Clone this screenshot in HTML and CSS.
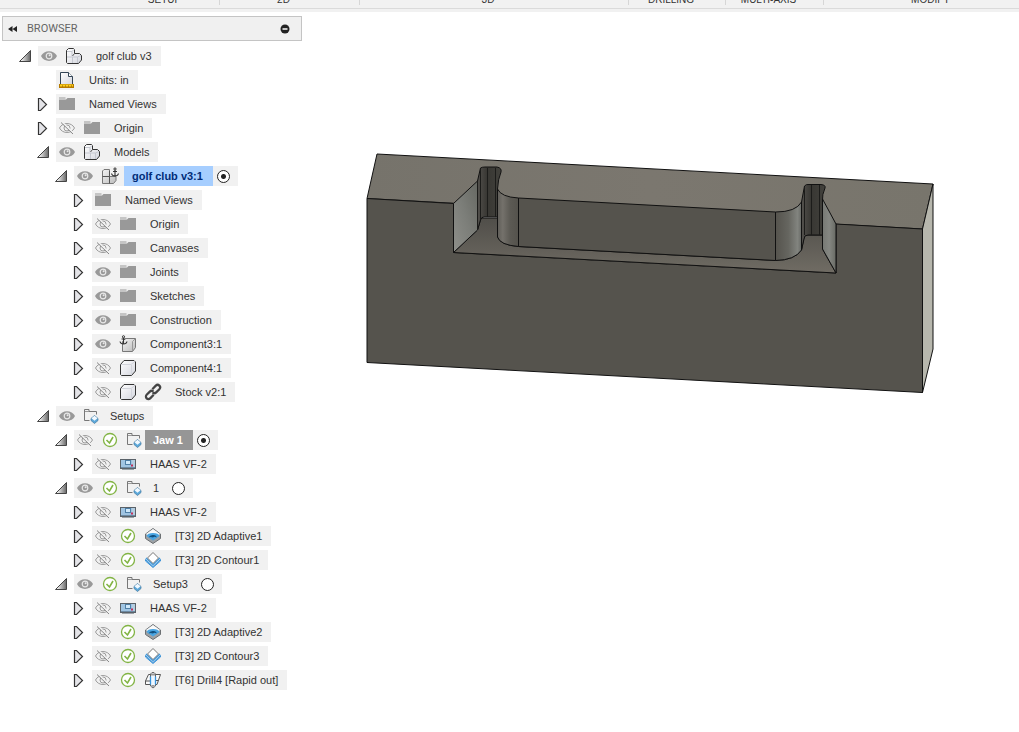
FILE: index.html
```html
<!DOCTYPE html>
<html lang="en">
<head>
<meta charset="utf-8">
<title>golf club v3</title>
<link rel="stylesheet" href="styles.css">
</head>
<body>
<svg class="defs" width="0" height="0" aria-hidden="true">
  <defs>
    <linearGradient id="g-tri" x1="0" y1="0" x2="1" y2="0"><stop offset="0.2" stop-color="#eee"/><stop offset="1" stop-color="#666"/></linearGradient>
    <linearGradient id="g-box" x1="0" y1="0" x2="1" y2="1"><stop offset="0" stop-color="#fff"/><stop offset="1" stop-color="#d4d6de"/></linearGradient>
    <linearGradient id="g-grey" x1="0" y1="0" x2="1" y2="1"><stop offset="0" stop-color="#f4f4f4"/><stop offset="1" stop-color="#bcbcbc"/></linearGradient>
    <symbol id="open" viewBox="0 0 24 20"><path d="M16.500 4.500V15.500H5.500Z" fill="url(#g-tri)" stroke="#444"/></symbol>
    <symbol id="closed" viewBox="0 0 24 20"><path d="M6.500 4.500H8.500L14.500 10.500L8.500 16.500H6.500Z" fill="#e4e4e8" stroke="#333" stroke-width="1.200"/></symbol>
    <symbol id="eye" viewBox="0 0 22 20"><path d="M3 10C6 3.500 16 3.500 19 10C16 16.500 6 16.500 3 10Z" fill="#999"/><circle cx="11" cy="10" r="2.800" fill="none" stroke="#e8e8e8" stroke-width="1.200"/><circle cx="11.600" cy="9.300" r="1" fill="#e8e8e8"/></symbol>
    <symbol id="hidden" viewBox="0 0 22 20"><path d="M3.500 10C6.500 4 15.500 4 18.500 10C15.500 16 6.500 16 3.500 10Z" fill="none" stroke="#9c9c9c"/><circle cx="11" cy="10" r="3" fill="none" stroke="#9c9c9c"/><path d="M6 4L18 15.500" stroke="#f1f1f1" stroke-width="1.600"/><path d="M5 4.500L17 16" stroke="#888"/></symbol>
    <symbol id="folder" viewBox="0 0 22 20"><path d="M3 3.500H9.500V4.500H3ZM3 5.500H10L11.500 4H19V16H3Z" fill="#999"/></symbol>
    <symbol id="doc" viewBox="0 0 22 20"><path d="M4.500 14V2.500H12.500L16.500 6.500V14" fill="url(#g-box)" stroke="#345"/><path d="M12.500 2.500V6.500H16.500" fill="#fff" stroke="#345"/><path d="M3 14H18V18H3Z" fill="#b67a00"/><path d="M4 15.500H17" stroke="#ffd21c" stroke-width="2"/><path d="M6 16H16" stroke="#8a5a00" stroke-dasharray="1 2"/></symbol>
    <symbol id="parts" viewBox="0 0 22 20"><path d="M3.500 4.500L5.500 2.500H10.500L11.500 3.500V7.500H16.500L18.500 9.500V14L15.500 17.500H4.500L3.500 16.500Z" fill="url(#g-box)" stroke="#333" stroke-linejoin="round"/><path d="M4 5.500H9L11 3.500M9 5.500V10M4 11H14.500L18 9.500M9.500 11V17M14.500 11V17" fill="none" stroke="#c4c7d0"/><path d="M11.500 7.500L9.500 10" fill="none" stroke="#555"/></symbol>
    <symbol id="parts-fixed" viewBox="0 0 22 20"><path d="M3.500 5L5 3.500H10.500V10.500H17V14.500L14.500 17.500H3.500Z" fill="url(#g-grey)" stroke="#777"/><path d="M3.500 10.500H10.500V17.500M10.500 5V10.500" fill="none" stroke="#555"/><path d="M16 4V9.500M14 5.500H18M12.500 7.500Q13 10 16 10Q19 10 19.500 7.500" fill="none" stroke="#333" stroke-width="1.100"/><circle cx="16" cy="3" r="1.100" fill="none" stroke="#333"/></symbol>
    <symbol id="box-fixed" viewBox="0 0 22 20"><path d="M5.500 7.500L8.500 4.500H18.500V13.500L15.500 17.500H5.500Z" fill="url(#g-grey)" stroke="#777"/><path d="M15.500 17V7.500L18 5" fill="none" stroke="#999"/><path d="M6.500 3.500V9.500M4.500 5H8.500M3 7.500Q3.500 10 6.500 10Q9.500 10 10 7.500" fill="none" stroke="#333" stroke-width="1.100"/><circle cx="6.500" cy="2.800" r="1.100" fill="#f1f1f1" stroke="#333"/></symbol>
    <symbol id="box" viewBox="0 0 22 20"><path d="M3.500 6.500L7 2.500H17L18.500 4V13L14.500 17.500H4.500L3.500 16.500Z" fill="url(#g-box)" stroke="#333" stroke-linejoin="round"/><path d="M4 6.500H14L18 3.500M14.500 7V17" fill="none" stroke="#d3d5dc"/></symbol>
    <symbol id="link" viewBox="0 0 22 20"><g transform="rotate(-45 11 10)" fill="none" stroke="#444" stroke-width="2.200"><path d="M9.500 12.500H4.500A2.500 2.500 0 0 1 4.500 7.500H9A2.500 2.500 0 0 1 11.500 10"/><path d="M12.500 7.500H17.500A2.500 2.500 0 0 1 17.500 12.500H13A2.500 2.500 0 0 1 10.500 10"/></g></symbol>
    <symbol id="setup" viewBox="0 0 21 20"><path d="M8.500 14.500H3.500V3.500H8V5.500H15.500V8.500" fill="none" stroke="#777"/><path d="M4 5.500H8" stroke="#999"/><path d="M13.500 9.500L17 12.500V14.500L13.500 17.500L10 14.500V12.500Z" fill="#5ba8da" stroke="#4b7fa5" stroke-width="0.800"/><path d="M13.500 9.800L16.500 12.300L13.500 14.800L10.500 12.300Z" fill="#f2f9ff"/></symbol>
    <symbol id="ok" viewBox="0 0 22 20"><circle cx="11" cy="10" r="6.500" fill="#fff" stroke="#82b444" stroke-width="1.300"/><path d="M7.500 10L10.500 13L14 7" fill="none" stroke="#82b444" stroke-width="1.600"/></symbol>
    <symbol id="machine" viewBox="0 0 22 20"><rect x="3.500" y="5.500" width="15" height="9" fill="#9fc4e2" stroke="#5a6269"/><path d="M4 13.500H18" stroke="#6d8ba4"/><path d="M5 15.500H17" stroke="#9aa2a8"/><rect x="8.500" y="6.500" width="5" height="4" fill="#cfe8fa" stroke="#4f7fa6"/><path d="M15 6H18V13H15Z" fill="#b4cde0"/><path d="M14 11.500H16" stroke="#c2305a" stroke-width="2"/></symbol>
    <symbol id="adaptive" viewBox="0 0 22 20"><path d="M3.500 8L11 2.500L18.500 8V12.500L11 17.500L3.500 12.500Z" fill="#9da1a5" stroke="#6c7073" stroke-linejoin="round"/><path d="M4 8L11 3L18 8L11 13Z" fill="#fafafa"/><path d="M4.500 10Q5.500 7 11 7Q16.500 7 17.500 10L11 14.500Z" fill="#4aa5e2"/><path d="M6.500 11.500Q8 8.500 11.500 9Q15 9.500 14.500 11.500Q12.500 10 11 11.500Q8.500 10.500 6.500 11.500Z" fill="#12507f"/></symbol>
    <symbol id="contour" viewBox="0 0 22 20"><path d="M3.500 9.500L11 16.500L18.500 9.500V11L11 17.500L3.500 11Z" fill="#8cc8f5" stroke="#3d92d6"/><path d="M4 8L11 14.500L18 8" fill="none" stroke="#3f9ae0" stroke-width="1.400"/><path d="M11 2.500L16.500 8L11 13.500L5.500 8Z" fill="#fff" stroke="#777"/></symbol>
    <symbol id="drill" viewBox="0 0 22 20"><path d="M6.500 4.500H18.500L15 14.500H12.500M9 14.500H3.500V11L6.500 4.500M3.500 11H8M13 10.500H16" fill="#fafafa" stroke="#555"/><path d="M8.500 4L10 2.500H12L13.500 4V16L11 18L8.500 16Z" fill="#eef7ff" stroke="#666"/><path d="M8.500 6.500V14.500M13.500 6.500V14.500" stroke="#3593dd" stroke-width="1.300"/><path d="M9 3.500H13V5.500H9ZM9 15H13L11 17.500Z" fill="#999"/></symbol>
  </defs>
</svg>

<header class="toolbar">
  <div class="groups">
    <span class="group first">SETUP</span>
    <span class="group">2D</span>
    <span class="group">3D</span>
    <span class="group">DRILLING</span>
    <span class="group">MULTI-AXIS</span>
    <span class="group last">MODIFY</span>
  </div>
</header>

<div class="workspace">
<aside class="panel">
  <div class="panel-head">
    <button class="plain" aria-label="Collapse panel"><svg width="12" height="10"><path d="M5.500 2V8L1 5ZM10 2V8L5.500 5Z" fill="#222"/></svg></button>
    <h1>BROWSER</h1>
    <button class="plain" aria-label="Minimise"><svg width="10" height="10"><circle cx="5" cy="5" r="4.500" fill="#222"/><path d="M2.500 5H7.500" stroke="#fff" stroke-width="1.500"/></svg></button>
  </div>

  <ul class="tree">
    <li>
      <div class="row"><button class="toggle" aria-label="Collapse"><svg><use href="#open"/></svg></button><div class="item"><button class="icon" aria-label="Hide"><svg><use href="#eye"/></svg></button><svg class="icon"><use href="#parts"/></svg><span class="name">golf club v3</span></div></div>
      <ul>
        <li><div class="row leaf"><div class="item"><svg class="icon"><use href="#doc"/></svg><span class="name">Units: in</span></div></div></li>
        <li><div class="row"><button class="toggle" aria-label="Expand"><svg><use href="#closed"/></svg></button><div class="item"><svg class="icon"><use href="#folder"/></svg><span class="name">Named Views</span></div></div></li>
        <li><div class="row"><button class="toggle" aria-label="Expand"><svg><use href="#closed"/></svg></button><div class="item"><button class="icon" aria-label="Show"><svg><use href="#hidden"/></svg></button><svg class="icon"><use href="#folder"/></svg><span class="name">Origin</span></div></div></li>
        <li>
          <div class="row"><button class="toggle" aria-label="Collapse"><svg><use href="#open"/></svg></button><div class="item"><button class="icon" aria-label="Hide"><svg><use href="#eye"/></svg></button><svg class="icon"><use href="#parts"/></svg><span class="name">Models</span></div></div>
          <ul>
            <li>
              <div class="row"><button class="toggle" aria-label="Collapse"><svg><use href="#open"/></svg></button><div class="item"><button class="icon" aria-label="Hide"><svg><use href="#eye"/></svg></button><svg class="icon"><use href="#parts-fixed"/></svg><label class="name selected" for="r-club">golf club v3:1</label><input class="radio" type="radio" name="component" id="r-club" checked></div></div>
              <ul>
                <li><div class="row"><button class="toggle" aria-label="Expand"><svg><use href="#closed"/></svg></button><div class="item"><svg class="icon"><use href="#folder"/></svg><span class="name">Named Views</span></div></div></li>
                <li><div class="row"><button class="toggle" aria-label="Expand"><svg><use href="#closed"/></svg></button><div class="item"><button class="icon" aria-label="Show"><svg><use href="#hidden"/></svg></button><svg class="icon"><use href="#folder"/></svg><span class="name">Origin</span></div></div></li>
                <li><div class="row"><button class="toggle" aria-label="Expand"><svg><use href="#closed"/></svg></button><div class="item"><button class="icon" aria-label="Show"><svg><use href="#hidden"/></svg></button><svg class="icon"><use href="#folder"/></svg><span class="name">Canvases</span></div></div></li>
                <li><div class="row"><button class="toggle" aria-label="Expand"><svg><use href="#closed"/></svg></button><div class="item"><button class="icon" aria-label="Hide"><svg><use href="#eye"/></svg></button><svg class="icon"><use href="#folder"/></svg><span class="name">Joints</span></div></div></li>
                <li><div class="row"><button class="toggle" aria-label="Expand"><svg><use href="#closed"/></svg></button><div class="item"><button class="icon" aria-label="Hide"><svg><use href="#eye"/></svg></button><svg class="icon"><use href="#folder"/></svg><span class="name">Sketches</span></div></div></li>
                <li><div class="row"><button class="toggle" aria-label="Expand"><svg><use href="#closed"/></svg></button><div class="item"><button class="icon" aria-label="Hide"><svg><use href="#eye"/></svg></button><svg class="icon"><use href="#folder"/></svg><span class="name">Construction</span></div></div></li>
                <li><div class="row"><button class="toggle" aria-label="Expand"><svg><use href="#closed"/></svg></button><div class="item"><button class="icon" aria-label="Hide"><svg><use href="#eye"/></svg></button><svg class="icon"><use href="#box-fixed"/></svg><span class="name">Component3:1</span></div></div></li>
                <li><div class="row"><button class="toggle" aria-label="Expand"><svg><use href="#closed"/></svg></button><div class="item"><button class="icon" aria-label="Show"><svg><use href="#hidden"/></svg></button><svg class="icon"><use href="#box"/></svg><span class="name">Component4:1</span></div></div></li>
                <li><div class="row"><button class="toggle" aria-label="Expand"><svg><use href="#closed"/></svg></button><div class="item"><button class="icon" aria-label="Show"><svg><use href="#hidden"/></svg></button><svg class="icon"><use href="#box"/></svg><svg class="icon"><use href="#link"/></svg><span class="name">Stock v2:1</span></div></div></li>
              </ul>
            </li>
          </ul>
        </li>
        <li>
          <div class="row"><button class="toggle" aria-label="Collapse"><svg><use href="#open"/></svg></button><div class="item"><button class="icon" aria-label="Hide"><svg><use href="#eye"/></svg></button><svg class="icon narrow"><use href="#setup"/></svg><span class="name">Setups</span></div></div>
          <ul>
            <li>
              <div class="row"><button class="toggle" aria-label="Collapse"><svg><use href="#open"/></svg></button><div class="item"><button class="icon" aria-label="Show"><svg><use href="#hidden"/></svg></button><svg class="icon"><use href="#ok"/></svg><svg class="icon narrow"><use href="#setup"/></svg><label class="name active" for="r-jaw">Jaw 1</label><input class="radio" type="radio" name="setup" id="r-jaw" checked></div></div>
              <ul>
                <li><div class="row"><button class="toggle" aria-label="Expand"><svg><use href="#closed"/></svg></button><div class="item"><button class="icon" aria-label="Show"><svg><use href="#hidden"/></svg></button><svg class="icon"><use href="#machine"/></svg><span class="name">HAAS VF-2</span></div></div></li>
              </ul>
            </li>
            <li>
              <div class="row"><button class="toggle" aria-label="Collapse"><svg><use href="#open"/></svg></button><div class="item"><button class="icon" aria-label="Hide"><svg><use href="#eye"/></svg></button><svg class="icon"><use href="#ok"/></svg><svg class="icon narrow"><use href="#setup"/></svg><label class="name" for="r-1">1</label><input class="radio" type="radio" name="setup" id="r-1"></div></div>
              <ul>
                <li><div class="row"><button class="toggle" aria-label="Expand"><svg><use href="#closed"/></svg></button><div class="item"><button class="icon" aria-label="Show"><svg><use href="#hidden"/></svg></button><svg class="icon"><use href="#machine"/></svg><span class="name">HAAS VF-2</span></div></div></li>
                <li><div class="row"><button class="toggle" aria-label="Expand"><svg><use href="#closed"/></svg></button><div class="item"><button class="icon" aria-label="Show"><svg><use href="#hidden"/></svg></button><svg class="icon"><use href="#ok"/></svg><svg class="icon"><use href="#adaptive"/></svg><span class="name">[T3] 2D Adaptive1</span></div></div></li>
                <li><div class="row"><button class="toggle" aria-label="Expand"><svg><use href="#closed"/></svg></button><div class="item"><button class="icon" aria-label="Show"><svg><use href="#hidden"/></svg></button><svg class="icon"><use href="#ok"/></svg><svg class="icon"><use href="#contour"/></svg><span class="name">[T3] 2D Contour1</span></div></div></li>
              </ul>
            </li>
            <li>
              <div class="row"><button class="toggle" aria-label="Collapse"><svg><use href="#open"/></svg></button><div class="item"><button class="icon" aria-label="Hide"><svg><use href="#eye"/></svg></button><svg class="icon"><use href="#ok"/></svg><svg class="icon narrow"><use href="#setup"/></svg><label class="name" for="r-3">Setup3</label><input class="radio" type="radio" name="setup" id="r-3"></div></div>
              <ul>
                <li><div class="row"><button class="toggle" aria-label="Expand"><svg><use href="#closed"/></svg></button><div class="item"><button class="icon" aria-label="Show"><svg><use href="#hidden"/></svg></button><svg class="icon"><use href="#machine"/></svg><span class="name">HAAS VF-2</span></div></div></li>
                <li><div class="row"><button class="toggle" aria-label="Expand"><svg><use href="#closed"/></svg></button><div class="item"><button class="icon" aria-label="Show"><svg><use href="#hidden"/></svg></button><svg class="icon"><use href="#ok"/></svg><svg class="icon"><use href="#adaptive"/></svg><span class="name">[T3] 2D Adaptive2</span></div></div></li>
                <li><div class="row"><button class="toggle" aria-label="Expand"><svg><use href="#closed"/></svg></button><div class="item"><button class="icon" aria-label="Show"><svg><use href="#hidden"/></svg></button><svg class="icon"><use href="#ok"/></svg><svg class="icon"><use href="#contour"/></svg><span class="name">[T3] 2D Contour3</span></div></div></li>
                <li><div class="row"><button class="toggle" aria-label="Expand"><svg><use href="#closed"/></svg></button><div class="item"><button class="icon" aria-label="Show"><svg><use href="#hidden"/></svg></button><svg class="icon"><use href="#ok"/></svg><svg class="icon"><use href="#drill"/></svg><span class="name">[T6] Drill4 [Rapid out]</span></div></div></li>
              </ul>
            </li>
          </ul>
        </li>
      </ul>
    </li>
  </ul>
</aside>

<main class="viewport">
  <svg class="model" viewBox="304 12 715 720" role="img" aria-label="Vise jaw model">
    <defs>
      <linearGradient id="m-top" x1="0" x2="1"><stop offset="0" stop-color="#76736b"/><stop offset="0.500" stop-color="#7b776f"/><stop offset="1" stop-color="#78756c"/></linearGradient>
      <linearGradient id="m-wall" x1="0" y1="1" x2="1" y2="0"><stop offset="0" stop-color="#8e8f8a"/><stop offset="0.500" stop-color="#7c7e79"/><stop offset="1" stop-color="#666862"/></linearGradient>
      <linearGradient id="m-wall2" x1="0" x2="1"><stop offset="0" stop-color="#777974"/><stop offset="0.500" stop-color="#858782"/><stop offset="1" stop-color="#686a64"/></linearGradient>
      <linearGradient id="m-cyl" x1="0" x2="1"><stop offset="0" stop-color="#5f5d58"/><stop offset="0.250" stop-color="#74716b"/><stop offset="0.600" stop-color="#5c5a54"/><stop offset="1" stop-color="#54524c"/></linearGradient>
      <linearGradient id="m-cyl2" x1="0" x2="1"><stop offset="0" stop-color="#55534d"/><stop offset="0.500" stop-color="#666660"/><stop offset="0.850" stop-color="#82847f"/><stop offset="1" stop-color="#686a66"/></linearGradient>
      <linearGradient id="m-slot" x1="0" x2="1"><stop offset="0" stop-color="#53514d"/><stop offset="0.400" stop-color="#383733"/><stop offset="1" stop-color="#42413c"/></linearGradient>
      <linearGradient id="m-floor" x1="0" y1="0" x2="0" y2="1"><stop offset="0" stop-color="#504e49"/><stop offset="1" stop-color="#706c64"/></linearGradient>
    </defs>
    <g stroke="#111" stroke-linejoin="round">
      <path d="M377 154L933 184L922.500 229L367 198.500Z" fill="url(#m-top)"/>
      <path d="M922.500 229L933 184V349L922.500 392.500Z" fill="#b7b7ad"/>
      <path d="M367 198.500L453.500 203.500V252.500L836 273V224L922.500 229V392.500L367 362.500Z" fill="#55534d"/>
      <path d="M453.500 252.500L477.500 230L481 218H497.500V237Q500 245 518.500 246.500L775.500 260.500Q795 260 801.500 250L804.500 235H822.500V249L836 273Z" fill="url(#m-floor)"/>
      <path d="M518.500 198L775.500 212V260.500L518.500 246.500Z" fill="#55534d"/>
      <path d="M453.500 203.500L477.500 181V230L453.500 252.500Z" fill="url(#m-wall)"/>
      <path d="M477.500 181L480.500 168Q482 167 485 167H497Q502 168 501 172Q498 179 497.500 189V217H484Q481 217 480.500 220L477.500 230Z" fill="url(#m-slot)"/>
      <path d="M480.500 169V219M487.500 168V217M495.500 168V217M477.500 181V230" fill="none" stroke="#1c1c1a"/>
      <path d="M497.500 189Q501 197 518.500 198V246.500Q500 245 497.500 237Z" fill="url(#m-cyl)"/>
      <path d="M801.500 202L804.500 186Q806 184 809 184.500H821Q826 185 825 188Q822 195 822.500 200V235H808Q804 235 804 239L801.500 250Z" fill="url(#m-slot)"/>
      <path d="M804.500 187V235M811.500 185V235M819.500 185V235" fill="none" stroke="#1c1c1a"/>
      <path d="M775.500 212Q796 212 801.500 202V250Q795 260 775.500 260.500Z" fill="url(#m-cyl2)"/>
      <path d="M822.500 199L836 224V273L822.500 249Z" fill="url(#m-wall2)"/>
    </g>
  </svg>
</main>
</div>
</body>
</html>
```

FILE: styles.css
```css
* { box-sizing: border-box; }

body {
  margin: 0;
  background: #fff;
  color: #333;
  font: 11px/20px "Liberation Sans", Arial, sans-serif;
}

.defs { position: absolute; }

button {
  display: block;
  margin: 0;
  padding: 0;
  border: 0;
  background: none;
}

button svg { display: block; }

.toolbar {
  height: 12px;
  overflow: hidden;
  background: #f1f1f1;
}

.groups {
  display: grid;
  grid-template-columns: 220fr 140fr 269fr 97fr 98fr 195fr;
  height: 9px;
  border-bottom: 1px solid #dadada;
}

.group {
  height: 5px;
  padding-right: 12px;
  border-right: 1px solid #d6d6d6;
  font-size: 10px;
  line-height: 0;
  text-align: center;
}

.first { padding: 0 0 0 110px; }

.last {
  padding: 0 0 0 18px;
  border-right: 0;
}

.workspace {
  display: flex;
  align-items: flex-start;
}

.panel {
  flex: none;
  width: 300px;
  margin: 4px 2px 0;
}

.panel-head {
  display: flex;
  align-items: center;
  gap: 8px;
  height: 25px;
  padding: 0 11px 0 4px;
  border: 1px solid #c4c4c4;
  background: #f0f0f0;
}

.panel-head h1 {
  flex: 1;
  margin: 0;
  color: #666;
  font: 11px/20px Roboto, "Liberation Sans", sans-serif;
}

.tree,
.tree ul {
  margin: 0;
  padding: 0;
  list-style: none;
}

.tree { padding: 5px 0 0 12px; }

.tree ul { padding-left: 18px; }

.row {
  display: flex;
  margin-bottom: 4px;
}

.leaf { padding-left: 24px; }

.toggle,
.toggle svg {
  width: 24px;
  height: 20px;
}

.item {
  display: flex;
  align-items: center;
  height: 20px;
  background: #f1f1f1;
  white-space: nowrap;
}

.icon {
  flex: none;
  width: 22px;
  height: 20px;
  margin-right: 3px;
}

.icon svg {
  width: 22px;
  height: 20px;
}

.narrow {
  width: 21px;
  margin-right: 0;
}

.name { padding: 0 9px 0 8px; }

.selected,
.active {
  height: 20px;
  padding-right: 10px;
  font-weight: bold;
}

.selected {
  background: #a6ceff;
  color: #002c78;
}

.active {
  background: #969696;
  color: #fff;
}

.radio {
  appearance: none;
  width: 13px;
  height: 13px;
  margin: 0 8px 0 4px;
  border: 1px solid #222;
  border-radius: 50%;
  background: #fff;
}

.radio:checked { background: radial-gradient(circle, #222 0 2px, #fff 3px); }

.viewport {
  flex: 1;
  min-width: 0;
}

.model {
  display: block;
  width: 100%;
}
```
